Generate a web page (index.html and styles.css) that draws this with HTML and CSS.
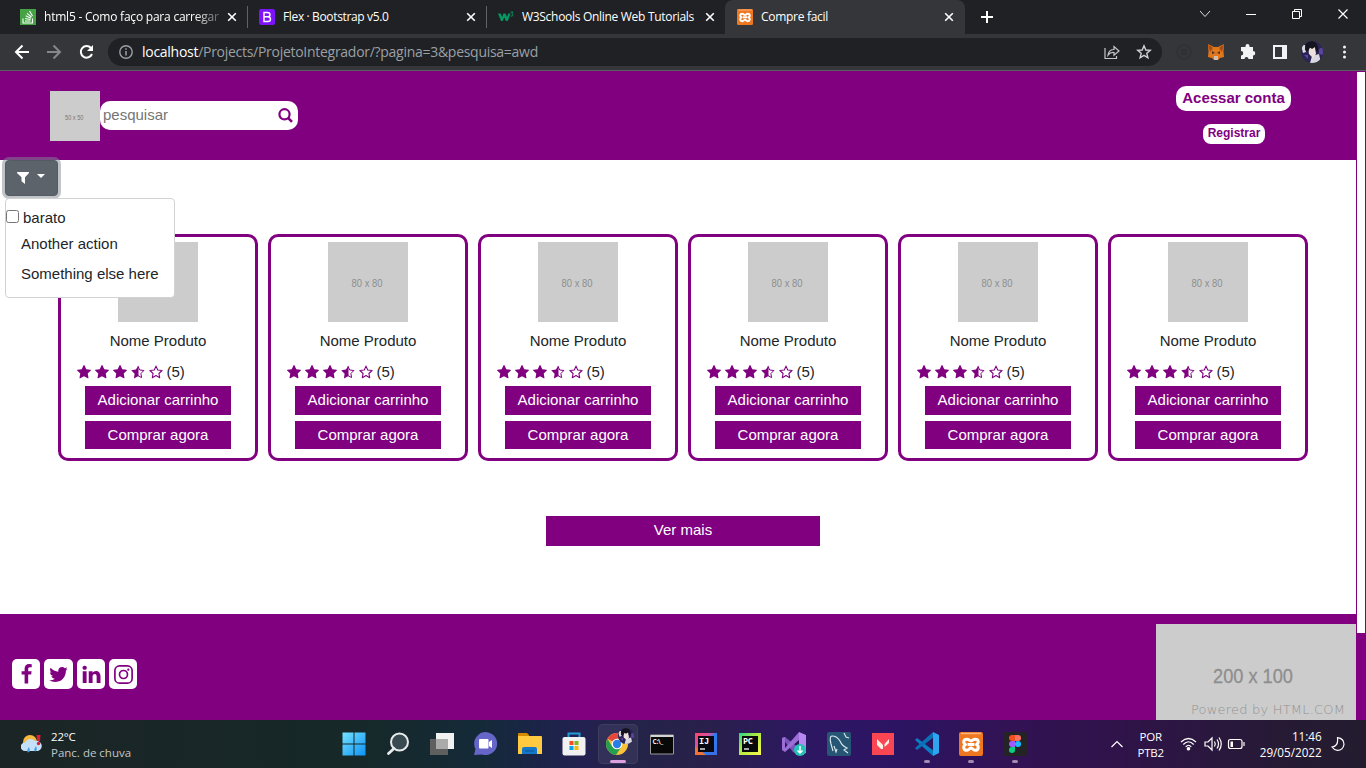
FILE: index.html
```html
<!DOCTYPE html>
<html lang="pt-br">
<head>
<meta charset="utf-8">
<title>Compre facil</title>
<link rel="stylesheet" href="styles.css">
</head>
<body>
<svg class="defs" aria-hidden="true">
  <symbol id="star" viewBox="0 0 1664 1664"><path fill="currentColor" d="M1664 615q0 22-26 48l-363 354 86 500q1 7 1 20 0 21-10.500 35.500t-30.500 14.500q-19 0-40-12l-449-236-449 236q-22 12-40 12-21 0-31.500-14.500t-10.500-35.500q0-6 2-20l86-500-364-354q-25-27-25-48 0-37 56-46l502-73 225-455q19-41 49-41t49 41l225 455 502 73q56 9 56 46z"/></symbol>
  <symbol id="star-o" viewBox="0 0 14 14"><path fill="none" stroke="currentColor" stroke-width="1.100" stroke-linejoin="round" d="M7 1.100 8.700 5 13.100 5.500 9.900 8.500 10.700 12.700 7 10.600 3.300 12.700 4.100 8.500 .9 5.500 5.300 5Z"/></symbol>
  <symbol id="star-h" viewBox="0 0 14 14"><path fill="none" stroke="currentColor" stroke-linejoin="round" d="M7 1.300 8.700 5 12.900 5.500 9.900 8.500 10.600 12.600 7 10.600"/><path fill="currentColor" d="M7.500.5V11L2.900 13.400 3.600 8.800.2 5.300 4.900 4.500Z"/></symbol>
  <symbol id="x" viewBox="0 0 10 10"><path d="M1.200 1.200 8.800 8.800M8.800 1.200 1.200 8.800" stroke="#fff" stroke-width="1.600"/></symbol>
  <symbol id="xampp" viewBox="0 0 24 24"><rect width="24" height="24" rx="2" fill="#ee7720"/><path d="M2 1.500H22" stroke="#f9b27c" stroke-width="1.500"/><path d="M8 7.200C4 7.200 4 11 6.500 12.500 4 14 4 18.300 8 18.300 10 18.300 10.500 16 12 16S14 18.300 16 18.300C20 18.300 20 14 17.500 12.500 20 11 20 7.200 16 7.200 14 7.200 13.500 9 12 9S10 7.200 8 7.200ZM8.500 12.500H15.500" fill="none" stroke="#fff" stroke-width="3" stroke-linejoin="round"/></symbol>
  <symbol id="ph80" viewBox="0 0 80 80"><rect width="80" height="80" fill="#ccc"/><text x="23.500" y="45" font-size="10.500" textLength="31" lengthAdjust="spacingAndGlyphs" fill="#8e8e8e">80 x 80</text></symbol>
  <symbol id="avatar" viewBox="0 0 22 22"><clipPath id="face"><circle cx="11" cy="11" r="11"/></clipPath><g clip-path="url(#face)"><path fill="#292455" d="M0 0H22V22H0Z"/><path fill="#d9d8e0" d="M0 4 4 4 5 11 2 12ZM9 22 11 15 18 13 20 22Z"/><path fill="#eee0df" d="M7 7 14 6 15 13 12 17 8 13Z"/><path fill="#15131d" d="M4 9Q3 1 11 0 18 1 17 11L15 10 14 6 11 8 9 6.500 7 11Z"/><path fill="#5944a0" d="M18 8 22 6V14L18 13ZM3 14 7 14 7 18Z"/></g></symbol>
</svg>

<div class="screen">
  <div class="tabs">
    <div class="tab t1">
      <svg class="fav" viewBox="0 0 16 16"><path fill="#45a245" d="M0 0H16V16H0Z"/><path d="M3 9.500V14H12.500V9.500M5 12H10.500M5 9.500 10.500 10.500M5.700 6.800 11 9.300M7 4.300 11.500 8M9.500 2 12.500 7" fill="none" stroke="#fff" stroke-width="1.100"/></svg>
      <span class="title fade">html5 - Como faço para carregar</span><svg class="close"><use href="#x"/></svg>
    </div>
    <div class="tab t2">
      <svg class="fav" viewBox="0 0 16 16"><rect width="16" height="16" rx="2" fill="#7d12fb"/><path d="M5 3.500H8.500Q11 3.500 11 5.700 11 7.700 8.700 7.800 11.500 8 11.500 10.200 11.500 12.500 8.800 12.500H5ZM5 7.800H8.700" fill="none" stroke="#fff" stroke-width="1.400"/></svg>
      <span class="title">Flex · Bootstrap v5.0</span><svg class="close"><use href="#x"/></svg>
    </div>
    <div class="tab t3">
      <svg class="fav" viewBox="0 0 16 16"><path d="M0 4.500H2.600L4 8 5.500 4.500H7.500L9 8 10.300 4.500H12.500L9.800 12H8L6.300 8.500 4.600 12H3Z" fill="#059862"/><path d="M12.500 3H15L13.800 4.700Q15.300 5 15 6.300 14.500 7.400 12.500 7" fill="none" stroke="#059862" stroke-width=".9"/></svg>
      <span class="title">W3Schools Online Web Tutorials</span><svg class="close"><use href="#x"/></svg>
    </div>
    <div class="tab t4 active">
      <svg class="fav"><use href="#xampp"/></svg>
      <span class="title">Compre facil</span><svg class="close"><use href="#x"/></svg>
    </div>
    <svg class="plus" viewBox="0 0 12 12"><path d="M6 0V12M0 6H12" stroke="#fff" stroke-width="2"/></svg>
    <svg class="winctl" viewBox="0 0 166 34" fill="none" stroke="#fff"><path d="M0 11 5 16.500 10 11" stroke="#ddd"/><path d="M46 14.500H56M92.500 11.500H99.500V18.500H92.500ZM94.500 11.500V9.500H101.500V16.500H99.500"/><path d="M138.500 9.500 147.500 18.500M147.500 9.500 138.500 18.500" stroke-width="1.200"/></svg>
  </div>

  <div class="toolbar">
    <svg class="nav" viewBox="0 0 84 18" fill="none" stroke-width="2"><path d="M15 9H2.500M8.500 2.500 2 9 8.500 15.500" stroke="#fff"/><path d="M33 9H45.500M39.500 2.500 46 9 39.500 15.500" stroke="#85878a"/><path d="M77 5A5.800 5.800 0 1 0 78 11" stroke="#fff"/><path d="M79 2V8H73Z" fill="#fff"/></svg>
    <div class="omni">
      <svg class="info" viewBox="0 0 14 14"><circle cx="7" cy="7" r="6.200" fill="none" stroke="#9aa0a6" stroke-width="1.400"/><path d="M7 6V10.500M7 3.200V4.800" stroke="#9aa0a6" stroke-width="1.500"/></svg>
      <span class="url"><b>localhost</b>/Projects/ProjetoIntegrador/?pagina=3&amp;pesquisa=awd</span>
      <svg class="share" viewBox="0 0 16 16" fill="none" stroke="#c5c7ca" stroke-width="1.200"><path d="M1 4V14.500H12.500V12M4 11Q5 5.500 10 5.500V2.500L15 7 10 11.300V8.500Q6.500 8 4 11Z"/></svg>
      <svg class="fav" viewBox="0 0 16 16"><path d="M8 1.800 9.800 6 14.300 6.300 10.800 9.300 11.900 13.800 8 11.400 4.100 13.800 5.200 9.300 1.700 6.300 6.200 6Z" fill="none" stroke="#d0d2d5" stroke-width="1.400"/></svg>
    </div>
    <svg class="ext" viewBox="0 0 184 24"><circle cx="8" cy="12" r="7" fill="none" stroke="#303134" stroke-width="1.500"/><path d="M5 9H11V15H5Z" fill="#303134"/>
      <path d="M32 4 38 7H42L48 4 47.500 12 48 17 44 18 42 20H38L36 18 32 17 32.500 12Z" fill="#e2761b"/><path d="M32 4 37 8 34 12ZM48 4 43 8 46 12Z" fill="#a64d16"/><path d="M36 11 39 13 36 14ZM44 11 41 13 44 14Z" fill="#453230"/><path d="M38 16H42V20H38Z" fill="#d0bdb0"/>
      <path d="M65 7H69.500V6A2 2 0 0 1 73.500 6V7H77V11A2 2 0 0 1 77 15.500V19H72.500A2 2 0 0 0 68.500 19H65V15.500A2 2 0 0 0 65 11Z" fill="#f1f3f4"/>
      <path d="M98 6H110V18H98Z" fill="none" stroke="#f1f3f4" stroke-width="2"/><path d="M106 6H110V18H106Z" fill="#f1f3f4"/>
      <use href="#avatar" x="125" y="1" width="22" height="22"/><g fill="#f1f3f4"><circle cx="168.500" cy="7" r="1.500"/><circle cx="168.500" cy="12" r="1.500"/><circle cx="168.500" cy="17" r="1.500"/></g></svg>
  </div>

  <div class="viewport">
    <div class="site">
      <header class="header">
        <svg class="logo" viewBox="0 0 50 50"><path d="M0 0H50V50H0Z" fill="#ccc"/><text x="15" y="29" font-size="6.500" textLength="18.500" lengthAdjust="spacingAndGlyphs" fill="#777">50 x 50</text></svg>
        <div class="search"><span>pesquisar</span><svg viewBox="0 0 15 15"><circle cx="6.500" cy="6.300" r="5.100" fill="none" stroke="#800080" stroke-width="2.200"/><path d="M10 9.800 14 13.800" stroke="#800080" stroke-width="2.600"/></svg></div>
        <div class="account"><a class="login">Acessar conta</a><a class="register">Registrar</a></div>
      </header>
      <main class="main">
        <div class="filter">
          <button class="filter-btn"><svg viewBox="0 0 12 12"><path d="M.3 0H11.700Q12.300.6 11.800 1.200L8 5.200V12L4.500 9.300V5.200L.2 1.200Q-.3.6.3 0Z" fill="#fff"/></svg><i></i></button>
          <div class="menu"><label><span class="check"></span>barato</label><a>Another action</a><a>Something else here</a></div>
        </div>
        <div class="cards">
          <article class="card"><svg class="pic"><use href="#ph80"/></svg><p>Nome Produto</p><div class="rate"><svg><use href="#star"/></svg><svg><use href="#star"/></svg><svg><use href="#star"/></svg><svg><use href="#star-h"/></svg><svg><use href="#star-o"/></svg><span>(5)</span></div><a class="btn add">Adicionar carrinho</a><a class="btn">Comprar agora</a></article>
          <article class="card"><svg class="pic"><use href="#ph80"/></svg><p>Nome Produto</p><div class="rate"><svg><use href="#star"/></svg><svg><use href="#star"/></svg><svg><use href="#star"/></svg><svg><use href="#star-h"/></svg><svg><use href="#star-o"/></svg><span>(5)</span></div><a class="btn add">Adicionar carrinho</a><a class="btn">Comprar agora</a></article>
          <article class="card"><svg class="pic"><use href="#ph80"/></svg><p>Nome Produto</p><div class="rate"><svg><use href="#star"/></svg><svg><use href="#star"/></svg><svg><use href="#star"/></svg><svg><use href="#star-h"/></svg><svg><use href="#star-o"/></svg><span>(5)</span></div><a class="btn add">Adicionar carrinho</a><a class="btn">Comprar agora</a></article>
          <article class="card"><svg class="pic"><use href="#ph80"/></svg><p>Nome Produto</p><div class="rate"><svg><use href="#star"/></svg><svg><use href="#star"/></svg><svg><use href="#star"/></svg><svg><use href="#star-h"/></svg><svg><use href="#star-o"/></svg><span>(5)</span></div><a class="btn add">Adicionar carrinho</a><a class="btn">Comprar agora</a></article>
          <article class="card"><svg class="pic"><use href="#ph80"/></svg><p>Nome Produto</p><div class="rate"><svg><use href="#star"/></svg><svg><use href="#star"/></svg><svg><use href="#star"/></svg><svg><use href="#star-h"/></svg><svg><use href="#star-o"/></svg><span>(5)</span></div><a class="btn add">Adicionar carrinho</a><a class="btn">Comprar agora</a></article>
          <article class="card"><svg class="pic"><use href="#ph80"/></svg><p>Nome Produto</p><div class="rate"><svg><use href="#star"/></svg><svg><use href="#star"/></svg><svg><use href="#star"/></svg><svg><use href="#star-h"/></svg><svg><use href="#star-o"/></svg><span>(5)</span></div><a class="btn add">Adicionar carrinho</a><a class="btn">Comprar agora</a></article>
        </div>
        <a class="more">Ver mais</a>
      </main>
      <footer class="footer">
        <div class="social">
          <a><svg viewBox="0 0 1792 1792"><path d="M1343 12v264h-157q-86 0-116 36t-30 108v189h293l-39 296h-254v759h-306v-759h-255v-296h255v-218q0-186 104-288.500t277-102.500q147 0 228 12z"/></svg></a>
          <a class="wide"><svg viewBox="0 0 1792 1792"><path d="M1684 408q-67 98-162 167 1 14 1 42 0 130-38 259.500t-115.500 248.500-184.500 210.500-258 146-323 54.500q-271 0-496-145 35 4 78 4 225 0 401-138-105-2-188-64.500t-114-159.500q33 5 61 5 43 0 85-11-112-23-185.500-111.500t-73.500-205.500v-4q68 38 146 41-66-44-105-115t-39-154q0-88 44-163 121 149 294.500 238.500t371.500 99.500q-8-38-8-74 0-134 94.500-228.500t228.500-94.500q140 0 236 102 109-21 205-78-37 115-142 178 93-10 186-50z"/></svg></a>
          <a><svg viewBox="0 0 1792 1792"><path d="M477 625v991h-330v-991h330zm21-306q1 73-50.500 122t-135.500 49h-2q-82 0-132-49t-50-122q0-74 51.500-122.500t134.500-48.500 133 48.500 51 122.500zm1166 729v568h-329v-530q0-105-40.500-164.500t-126.500-59.500q-63 0-105.500 34.500t-63.500 85.500q-11 30-11 81v553h-329q2-399 2-647t-1-296l-1-48h329v144h-2q20-32 41-56t56.500-52 87-43.500 114.500-15.500q171 0 275 113.500t104 332.500z"/></svg></a>
          <a><svg viewBox="0 0 20 20"><rect x="1.800" y="1.800" width="16.400" height="16.400" rx="4.500" fill="none" stroke="#800080" stroke-width="1.600"/><circle cx="10" cy="10" r="3.800" fill="none" stroke="#800080" stroke-width="1.600"/><circle cx="14.600" cy="5.400" r="1.100"/></svg></a>
        </div>
        <svg class="banner" viewBox="0 0 200 96"><path d="M0 0H200V96H0Z" fill="#ccc"/><text x="57" y="59" font-size="21" textLength="80" lengthAdjust="spacingAndGlyphs" fill="#8e8e8e" stroke="#8e8e8e" stroke-width=".3">200 x 100</text><text class="powered" x="35" y="90" font-size="13" textLength="154" fill="#929292">Powered by HTML.COM</text></svg>
      </footer>
    </div>
    <div class="scrollbar"><div class="thumb"></div></div>
  </div>

  <div class="taskbar">
    <div class="weather">
      <svg viewBox="0 0 22 20"><circle cx="9" cy="8" r="7" fill="#f7b93c"/><path d="M4 17A4 4 0 0 1 4 8.500 6 6 0 0 1 14 7 5 5 0 0 1 17 17Z" fill="#c5e1fa"/><path d="M8 13Q5 17 7 18.500 10 18 8 13M15 12Q12 16 14 17.500 17 17 15 12" fill="#4a9ce4"/><path d="M15.500 1H19.500L19 7H16Z" fill="#d81e34"/><circle cx="17.500" cy="9.500" r="1.700" fill="#d81e34"/></svg>
      <div>22°C<br><span>Panc. de chuva</span></div>
    </div>
    <div class="apps">
      <a><svg viewBox="0 0 24 24"><linearGradient id="win" x2="1" y2="1"><stop stop-color="#75e2ff"/><stop offset="1" stop-color="#0d92f5"/></linearGradient><path fill="url(#win)" d="M.5.500H11.500V11.500H.5ZM12.500.500H23.500V11.500H12.500ZM.5 12.500H11.500V23.500H.5ZM12.500 12.500H23.500V23.500H12.500Z"/></svg></a>
      <a><svg viewBox="0 0 24 24"><circle cx="13.500" cy="10" r="8.500" fill="#394b50" stroke="#e8eaeb" stroke-width="2"/><path d="M8 16.500 2.500 21.500" stroke="#e8eaeb" stroke-width="2.800" stroke-linecap="round"/></svg></a>
      <a><svg viewBox="0 0 24 24"><path d="M6 1H24V17H6Z" fill="#f1f1f1"/><path d="M0 7H18V23H0Z" fill="#605f60"/><path d="M6 7H18V17H6Z" fill="#aaa"/></svg></a>
      <a><svg viewBox="0 0 24 24"><path d="M0 23 1.500 17A11.500 11.500 0 1 1 8 22.500Z" fill="#6665c8"/><rect x="5" y="7" width="9.500" height="9.500" rx="1" fill="#fff"/><path d="M15 10 18 8V16L15 14Z" fill="#fff"/></svg></a>
      <a><svg viewBox="1 0 24 24"><path d="M1 2Q1 1 2 1H10L12 3V6H1Z" fill="#d38a00"/><path d="M1 4H24Q25 4 25 5V22H1Z" fill="#ffca3f"/><path d="M5 22V17Q5 15 7 15H18Q20 15 20 17V22Z" fill="#1477c8"/><path d="M8 19H17" stroke="#095596"/></svg></a>
      <a><svg viewBox="0 0 24 24"><path d="M6.500 6V1.500H17.500V6" fill="none" stroke="#239bd7" stroke-width="2"/><rect x=".5" y="5" width="23" height="18.500" rx="2" fill="#f1f1f2"/><path d="M7.500 9H11.500V13H7.500Z" fill="#f24e24"/><path d="M12.500 9H16.500V13H12.500Z" fill="#7db91b"/><path d="M7.500 14H11.500V18H7.500Z" fill="#02a3ec"/><path d="M12.500 14H16.500V18H12.500Z" fill="#fab70b"/></svg></a>
      <a class="on"><svg class="chrome" viewBox="0 0 30 28"><circle cx="12" cy="16" r="11" fill="#f9c23a"/><path d="M12 16 2.500 10.500A11 11 0 0 1 21.500 10.500L12 10.500Z" fill="#e2483d"/><path d="M2.500 10.500A11 11 0 0 0 11 27L16.500 18.500 7 18.500Z" fill="#269e50"/><circle cx="12" cy="16" r="5.300" fill="#fff"/><circle cx="12" cy="16" r="4.200" fill="#287de8"/><use href="#avatar" x="13" y="0" width="16" height="16"/></svg><i></i></a>
      <a><svg viewBox="0 0 24 24"><path d="M.5 3H23.500V22H.5Z" fill="#080808" stroke="#999"/><path d="M1 4H23" stroke="#d3d3d3" stroke-width="2"/><text x="2.500" y="12" font-size="6.500" font-weight="bold" fill="#eee">C:\_</text></svg></a>
      <a><svg viewBox="0 0 24 24"><linearGradient id="ij" x2="1" y2="1"><stop stop-color="#fe4268"/><stop offset=".35" stop-color="#d851a2"/><stop offset=".5" stop-color="#257ff2"/><stop offset="1" stop-color="#416be2"/></linearGradient><path fill="url(#ij)" d="M1 1H23V23H1Z"/><path d="M1 14V23H12Z" fill="#f27335"/><path d="M4 4H20V20H4Z" fill="#090711"/><text x="5" y="12" font-size="8.500" font-weight="bold" fill="#fff" class="mono">IJ</text><path d="M6 17H11" stroke="#ddd" stroke-width="1.500"/></svg></a>
      <a><svg viewBox="0 0 24 24"><linearGradient id="pc" x2="1" y2="1"><stop stop-color="#21d789"/><stop offset=".4" stop-color="#a8e842"/><stop offset="1" stop-color="#fcf84a"/></linearGradient><path fill="url(#pc)" d="M1 1H23V23H1Z"/><path d="M4 4H20V20H4Z" fill="#08090a"/><text x="5" y="12" font-size="8" font-weight="bold" fill="#fff">PC</text><path d="M6 17H11" stroke="#ddd" stroke-width="1.500"/></svg></a>
      <a><svg viewBox="0 0 24 24"><path d="M0 6 3 5 17 16V23L11 20Z" fill="#7856ba"/><path d="M17 0 24 3V21L17 23Z" fill="#b48af0"/><path d="M17 0V8L3 20 0 18V6L3 5V16Z" fill="#9c6dd6"/><circle cx="18" cy="18" r="6" fill="#26c2b7"/><path d="M18 14V21M15.500 18.500 18 21 20.500 18.500" fill="none" stroke="#fff" stroke-width="1.500"/></svg></a>
      <a><svg viewBox="0 0 24 24"><rect width="24" height="24" rx="2" fill="#265673"/><path d="M6 19 4 12Q2 4 5 4 10 4 13 9 15 14 20 16L17 18 21 21M7 14 9 20 10 17M17 1 19 5 22 6" fill="none" stroke="#dcebf1" stroke-width="1.100"/></svg></a>
      <a><svg viewBox="0 0 24 24"><path d="M1 1H23V23H1Z" fill="#fb4553"/><path d="M6 7 12 13V17H10L6 13ZM18 7 13.500 12V15L18 11Z" fill="#fff0e6"/></svg></a>
      <a><svg viewBox="0 0 24 24"><path d="M0 8 2 6 19 19 18 24Z" fill="#087fc5"/><path d="M0 16 2 18 19 5 18 0Z" fill="#0b71b7"/><path d="M18 0 24 3V21L18 24Z" fill="#30a5ef"/></svg><i class="dot"></i></a>
      <a><svg><use href="#xampp"/></svg><i class="dot"></i></a>
      <a><svg viewBox="0 0 24 24"><rect width="24" height="24" rx="2" fill="#242326"/><path d="M12 3H9A3 3 0 0 0 9 9H12Z" fill="#f24e1e"/><path d="M12 3H15A3 3 0 0 1 15 9H12Z" fill="#ff7262"/><path d="M12 9H9A3 3 0 0 0 9 15H12Z" fill="#a259ff"/><circle cx="15" cy="12" r="3" fill="#1abcfe"/><path d="M12 15H9A3 3 0 1 0 12 18Z" fill="#0acf83"/></svg><i class="dot"></i></a>
    </div>
    <div class="tray">
      <svg class="chev" viewBox="0 0 12 8"><path d="M.5 7 6 1.500 11.500 7" fill="none" stroke="#fff" stroke-width="1.200"/></svg>
      <div class="lang">POR<br>PTB2</div>
      <svg class="status" viewBox="0 0 66 16" fill="none" stroke="#fff" stroke-width="1.200"><path d="M1 6Q8.500-1 16 6M3.300 8.500Q8.500 3 13.700 8.500M5.700 11Q8.500 7.500 11.300 11"/><circle cx="8.500" cy="12.800" r="1.200" fill="#fff"/><path d="M25 6H28L32 2V14L28 10H25ZM34.500 5.500Q36 8 34.500 10.500M37 3.500Q40 8 37 12.500M39 1.500Q43.500 8 39 14.500M50.500 3.500H60Q62 3.500 62 5.500V10.500Q62 12.500 60 12.500H50.500Q48.500 12.500 48.500 10.500V5.500Q48.500 3.500 50.500 3.500ZM64 6V10"/><path d="M50.500 5.500H53V11H50.500Z" fill="#fff" stroke="none"/></svg>
      <div class="clock">11:46<br>29/05/2022</div>
      <svg class="moon" viewBox="0 0 14 14"><path d="M6.500.700Q13 1.500 13 7.500 12 13.300 6.500 13.300 3 13 1 10 7.500 9.500 6.500.700Z" fill="none" stroke="#fff" stroke-width="1.200"/></svg>
    </div>
  </div>
</div>
</body>
</html>
```
FILE: styles.css
```css
* { box-sizing: border-box; }
body { margin: 0; overflow: hidden; font: 15px/22px "Liberation Sans", Arial, sans-serif; color: #212529; }
.defs { position: absolute; width: 0; height: 0; }
svg { display: block; flex: none; }
.screen { width: 1366px; height: 768px; display: flex; flex-direction: column; }

/* browser tabs */
.tabs { height: 34px; flex: none; background: #202124; display: flex; align-items: center; color: #fff; font: 12px/16px "Open Sans", sans-serif; }
.tab { height: 34px; display: flex; align-items: center; padding: 0 11px 0 12px; }
.t1 { width: 248px; padding: 0 10px 0 20px; border-right: 1px solid transparent; border-image: linear-gradient(transparent 7px, #5f6368 7px 27px, transparent 27px) 1; }
.t2 { width: 239px; padding: 0 10px 0 11px; border-right: 1px solid transparent; border-image: linear-gradient(transparent 7px, #5f6368 7px 27px, transparent 27px) 1; }
.t3 { width: 238px; padding: 0 10px 0 11px; }
.t4 { width: 240px; }
.active { background: #35363a; border-radius: 8px 8px 0 0; }
.fav { width: 16px; height: 16px; }
.title { flex: 1; margin-left: 8px; white-space: nowrap; letter-spacing: -.3px; }
.t1 .title { letter-spacing: -.22px; }
.t2 .title { letter-spacing: -.36px; }
.fade { -webkit-mask-image: linear-gradient(90deg, #000 150px, rgba(0,0,0,.3) 174px); }
.close { width: 10px; height: 10px; }
.plus { width: 12px; height: 12px; margin-left: 16px; }
.winctl { width: 166px; height: 34px; margin-left: auto; }

/* address bar */
.toolbar { height: 37px; flex: none; background: #35363a; border-bottom: 1px solid #5c5e61; display: flex; align-items: center; }
.nav { width: 84px; height: 18px; margin-left: 14px; }
.omni { width: 1054px; height: 28px; margin-left: 10px; border-radius: 14px; background: #202124; display: flex; align-items: center; padding: 0 10px 0 11px; }
.info { width: 14px; height: 14px; }
.url { flex: 1; margin-left: 9px; font: 14px/20px "Open Sans", sans-serif; color: #9aa0a6; letter-spacing: -.28px; }
.url b { font-weight: 400; color: #fff; }
.share { width: 16px; height: 16px; margin-right: 16px; }
.ext { width: 184px; height: 24px; margin-left: 14px; }

/* page */
.viewport { height: 649px; flex: none; display: flex; background: #fff; }
.site { width: 1356px; display: flex; flex-direction: column; }
.header { height: 89px; background: #800080; display: flex; align-items: flex-start; padding: 0 65px 0 50px; }
.logo { width: 50px; height: 50px; margin-top: 20px; }
.search { width: 198px; height: 29px; margin-top: 30px; border-radius: 10px; background: #fff; display: flex; align-items: center; justify-content: space-between; padding: 0 5px 1px 3px; color: #757575; }
.search svg { width: 15px; height: 15px; }
.account { margin-left: auto; padding-top: 15px; width: 115px; display: flex; flex-direction: column; align-items: center; color: #800080; font-weight: 700; }
.login { width: 115px; height: 25px; line-height: 24px; border-radius: 10px; background: #fff; text-align: center; }
.register { width: 62px; height: 20px; margin: 12.500px 0 0 1px; font-size: 12px; line-height: 19px; border-radius: 8px; background: #fff; text-align: center; }
.main { height: 454px; display: flex; flex-direction: column; }
.filter { position: relative; z-index: 2; height: 74px; padding-left: 5px; }
.filter-btn { width: 53px; height: 36px; padding: 0 11px; display: flex; align-items: center; border: 1px solid #545b62; border-radius: 4px; background: #5c636a; box-shadow: 0 0 0 3px rgba(130,138,145,.5); }
.filter-btn svg { width: 12px; height: 12px; }
.filter-btn i { margin: -4px 0 0 8px; border: 4.5px solid transparent; border-top-color: #fff; border-bottom: 0; }
.menu { position: absolute; left: 5px; top: 38px; width: 170px; height: 100px; padding-top: 7px; border: 1px solid #d2d2d2; border-radius: 4px; background: #fff; display: flex; flex-direction: column; }
.menu label { height: 24px; line-height: 24px; display: flex; align-items: center; }
.check { width: 13px; height: 13px; margin: -3px 4px 0 0; border: 1px solid #767676; border-radius: 2.5px; }
.menu a { height: 30px; line-height: 28px; padding-left: 15px; white-space: nowrap; }
.cards { display: flex; gap: 10px; padding-left: 58px; }
.card { width: 200px; height: 227px; border: 3px solid #800080; border-radius: 10px; padding-top: 5px; display: flex; flex-direction: column; align-items: center; flex: none; }
.pic { width: 80px; height: 80px; }
.card p { margin: 8px 0 0; }
.rate { align-self: stretch; display: flex; align-items: center; gap: 4px; height: 22px; margin-top: 9px; padding-left: 15.5px; color: #800080; }
.rate svg { width: 14px; height: 14px; }
.rate span { color: #212529; }
.btn { width: 146px; height: 28px; margin-top: 6px; line-height: 28px; background: #800080; color: #fff; text-align: center; }
.add { height: 29px; margin-top: 3px; }
.more { width: 274px; height: 30px; line-height: 28px; margin: 55px 0 0 546px; background: #800080; color: #fff; text-align: center; }
.footer { height: 106px; background: #800080; display: flex; justify-content: space-between; align-items: flex-start; padding-left: 12px; }
.social { display: flex; gap: 4px; padding-top: 45px; }
.social a { width: 28px; height: 30px; border-radius: 5px; background: #fff; display: flex; align-items: center; justify-content: center; }
.social .wide { width: 29px; }
.social svg { width: 21px; height: 21px; fill: #800080; }
.banner { width: 200px; height: 96px; margin-top: 10px; }
.powered { font-family: "DejaVu Sans", sans-serif; font-weight: 200; }
.mono { font-family: "Liberation Mono", monospace; }
.scrollbar { width: 10px; background: #800080; padding: 1px 1px 0; }
.thumb { height: 561px; background: #fff; }

/* taskbar */
.taskbar { height: 48px; flex: none; display: flex; align-items: center; color: #fff; font: 11.5px/16px "Open Sans", sans-serif; letter-spacing: -.2px; background: linear-gradient(90deg, #1c2526 0, #162828 350px, #142a38 480px, #1b2448 540px, #232150 580px, #242348 640px, #29204b 710px, #2d1763 810px, #2c1462 900px, #321254 1010px, #2f1349 1120px, #261a35 1280px, #231c2e); }
.weather { width: 332px; padding: 2px 0 0 21px; display: flex; align-items: center; gap: 8px; }
.weather svg { width: 22px; height: 20px; margin-top: -2px; }
.weather span { color: #c2c6c8; letter-spacing: 0; }
.apps { display: flex; }
.apps a { width: 44.06px; height: 48px; display: flex; flex-direction: column; align-items: center; justify-content: center; position: relative; }
.apps a > svg { width: 24px; height: 24px; }
.apps a > .chrome { width: 30px; height: 28px; margin: -5px 0 0 4px; }
.on::before { content: ""; position: absolute; inset: 4px 2px; border: 1px solid #3d3d5c; border-radius: 4px; background: rgba(255,255,255,.07); z-index: 0; }
.on svg { position: relative; }
.apps i { position: absolute; bottom: 5px; width: 16px; height: 3px; border-radius: 2px; background: #dc9fe0; }
.apps .dot { width: 6px; background: #a18bb3; }
.tray { flex: 1; display: flex; align-items: center; padding-left: 74px; }
.chev { width: 12px; height: 8px; }
.lang { width: 34px; margin: 2px 0 0 11px; text-align: center; font-size: 11.5px; }
.status { width: 66px; height: 16px; margin-left: 12px; }
.clock { width: 66px; margin-left: 10px; text-align: right; font-size: 11.7px; letter-spacing: 0; }
.moon { width: 14px; height: 14px; margin-left: 9px; }
```
